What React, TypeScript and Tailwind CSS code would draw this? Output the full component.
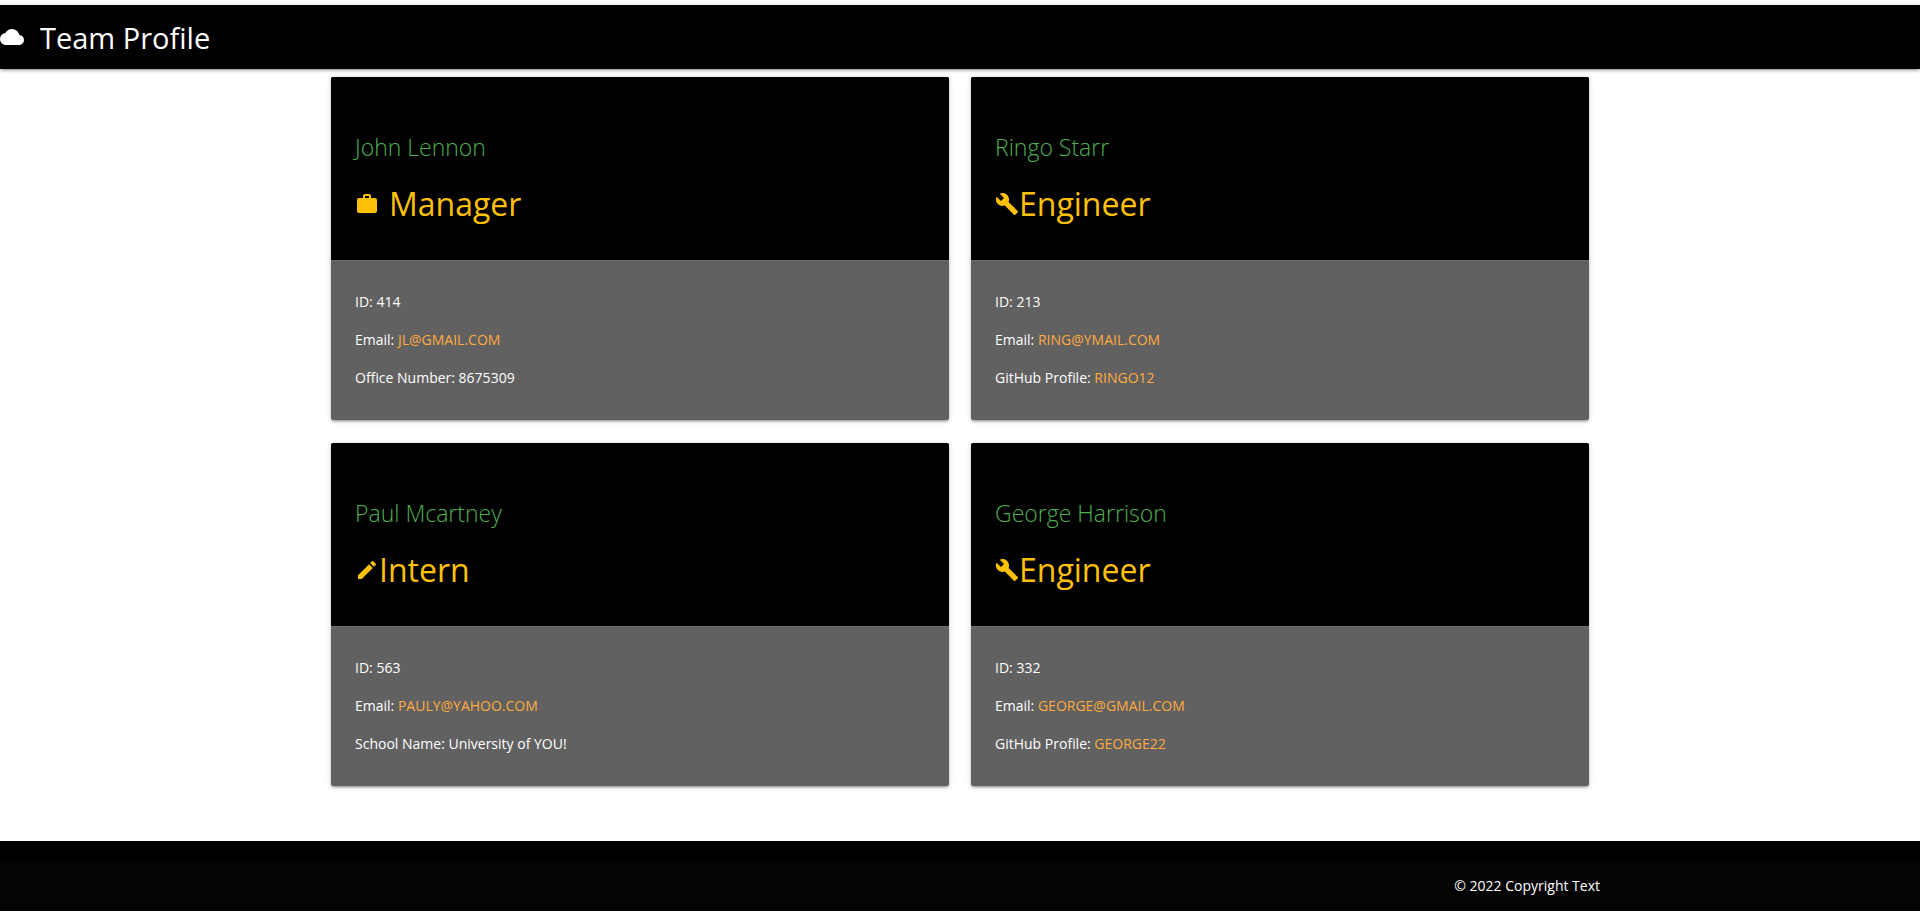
import type { IconType } from "react-icons";
import { MdBuild, MdCloud, MdEdit, MdWork } from "react-icons/md";

type Detail = { label: string; value: string; href?: string };

type Member = {
  name: string;
  role: string;
  icon: IconType;
  spaced?: boolean;
  details: Detail[];
};

const members: Member[] = [
  {
    name: "John Lennon",
    role: "Manager",
    icon: MdWork,
    spaced: true,
    details: [
      { label: "ID", value: "414" },
      { label: "Email", value: "JL@GMAIL.COM", href: "mailto:JL@GMAIL.COM" },
      { label: "Office Number", value: "8675309" },
    ],
  },
  {
    name: "Ringo Starr",
    role: "Engineer",
    icon: MdBuild,
    details: [
      { label: "ID", value: "213" },
      { label: "Email", value: "RING@YMAIL.COM", href: "mailto:RING@YMAIL.COM" },
      { label: "GitHub Profile", value: "RINGO12", href: "https://github.com/RINGO12" },
    ],
  },
  {
    name: "Paul Mcartney",
    role: "Intern",
    icon: MdEdit,
    details: [
      { label: "ID", value: "563" },
      { label: "Email", value: "PAULY@YAHOO.COM", href: "mailto:PAULY@YAHOO.COM" },
      { label: "School Name", value: "University of YOU!" },
    ],
  },
  {
    name: "George Harrison",
    role: "Engineer",
    icon: MdBuild,
    details: [
      { label: "ID", value: "332" },
      { label: "Email", value: "GEORGE@GMAIL.COM", href: "mailto:GEORGE@GMAIL.COM" },
      { label: "GitHub Profile", value: "GEORGE22", href: "https://github.com/GEORGE22" },
    ],
  },
];

function MemberCard({ member }: { member: Member }) {
  const Icon = member.icon;
  return (
    <article className="overflow-hidden rounded-xs bg-[#616161] shadow-[0_2px_2px_0_rgba(0,0,0,0.14),0_3px_1px_-2px_rgba(0,0,0,0.12),0_1px_5px_0_rgba(0,0,0,0.2)]">
      <div className="bg-black px-6 pt-[54px] pb-[34px]">
        <h2 className="text-[23px] leading-8 font-light text-[#4caf50]">{member.name}</h2>
        <h3
          className={`mt-[18px] flex items-center text-[32px] leading-[45px] text-[#ffc107] ${member.spaced ? "gap-[10px]" : ""}`}
        >
          <Icon className="size-6" aria-hidden="true" />
          <span>{member.role}</span>
        </h3>
      </div>
      <div className="border-t border-[#6e6e6e] px-6 pt-[22px] pb-[23px] text-sm leading-[38px] text-white">
        {member.details.map((d) => (
          <p key={d.label}>
            {d.label}:{" "}
            {d.href ? (
              <a href={d.href} className="text-[#ffab40]">
                {d.value}
              </a>
            ) : (
              d.value
            )}
          </p>
        ))}
      </div>
    </article>
  );
}

export default function App() {
  return (
    <div className="bg-white pt-[5px] font-['Open_Sans','Noto_Sans',sans-serif]">
      <header className="flex h-16 items-center gap-4 bg-black text-white shadow-[0_2px_2px_0_rgba(0,0,0,0.14),0_3px_1px_-2px_rgba(0,0,0,0.12),0_1px_5px_0_rgba(0,0,0,0.2)]">
        <MdCloud className="size-6" aria-hidden="true" />
        <h1 className="pt-0.5 text-[29px] leading-[62px]">Team Profile</h1>
      </header>
      <main className="mx-auto grid w-full max-w-[1280px] grid-cols-1 gap-x-[22px] gap-y-[23px] px-[11px] pt-2 pb-[55px] md:grid-cols-2">
        {members.map((m) => (
          <MemberCard key={m.name} member={m} />
        ))}
      </main>
      <footer className="bg-black pt-5 text-sm text-white">
        <div className="bg-[#040404]">
          <div className="mx-auto flex h-[50px] w-full max-w-[1280px] items-center justify-end">
            © 2022 Copyright Text
          </div>
        </div>
      </footer>
    </div>
  );
}
